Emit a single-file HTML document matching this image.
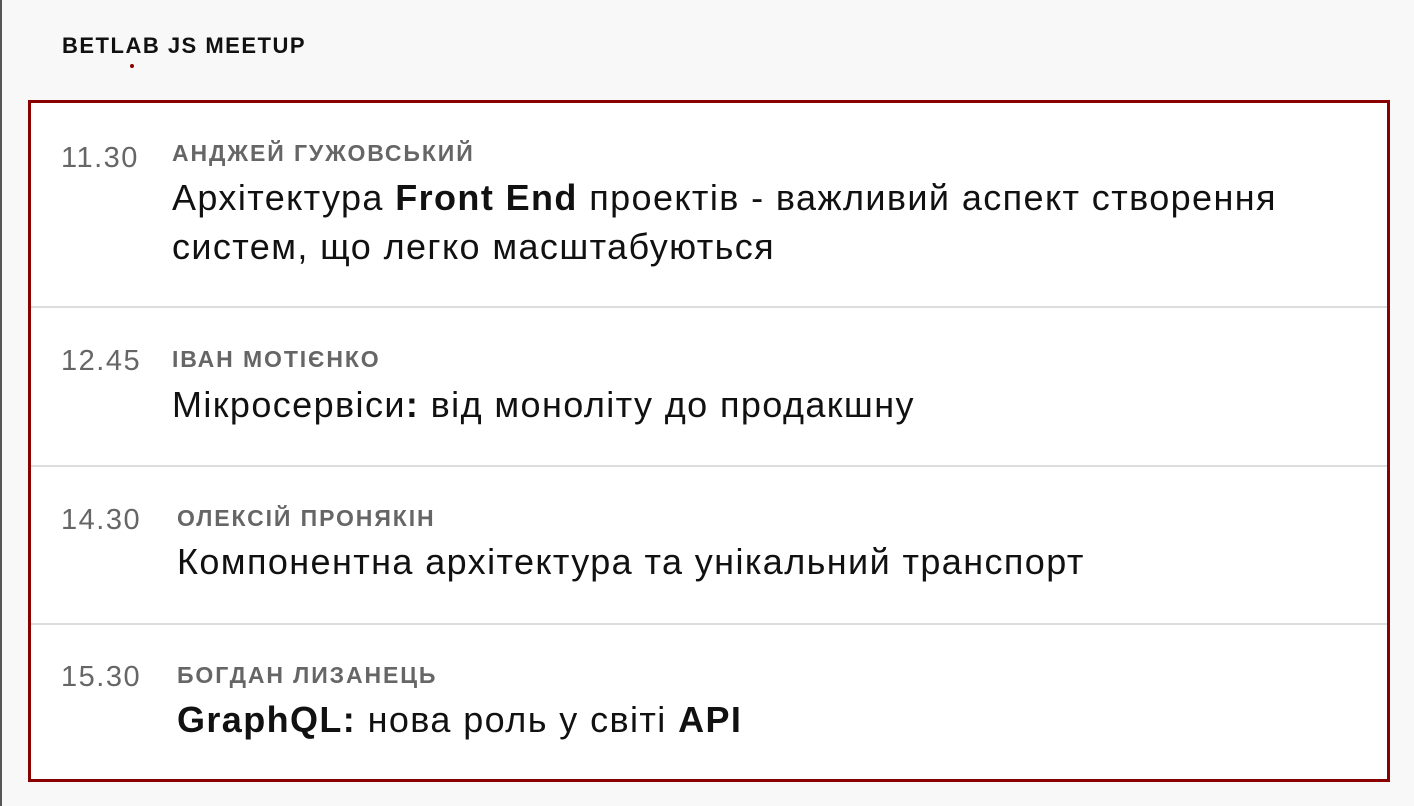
<!DOCTYPE html>
<html><head><meta charset="utf-8"><style>
body{margin:0;width:1414px;height:806px;background:#f8f8f8;font-family:"Liberation Sans",sans-serif;position:relative;overflow:hidden}
.strip{position:absolute;left:0;top:0;width:2px;height:806px;background:#555}
h1{position:absolute;left:62px;top:33px;margin:0;font-size:22px;font-weight:bold;color:#111;letter-spacing:1.5px}
.dot{position:absolute;left:130px;top:64px;width:4px;height:4px;border-radius:2px;background:#800}
.box{position:absolute;left:28px;top:100px;width:1356px;height:676px;border:3px solid #800;background:#fff}
.sep{position:absolute;left:0;right:0;height:2px;background:#ddd}
.t{position:absolute;font-size:29px;color:#666;line-height:1;letter-spacing:1.5px}
.n{position:absolute;font-size:23px;font-weight:bold;color:#666;line-height:1;letter-spacing:1.9px}
.ti{position:absolute;font-size:36px;color:#111;line-height:49px;white-space:nowrap;letter-spacing:1.4px}
</style></head><body>
<div class="strip"></div>
<h1>BETLAB JS MEETUP</h1>
<div class="dot"></div>
<div class="box">
<div class="sep" style="top:203px"></div>
<div class="sep" style="top:362px"></div>
<div class="sep" style="top:520px"></div>

<div class="t" style="left:30px;top:41px">11.30</div>
<div class="n" style="left:141px;top:39px">АНДЖЕЙ ГУЖОВСЬКИЙ</div>
<div class="ti" style="left:141px;top:70px">Архітектура <b>Front End</b> проектів - важливий аспект створення<br>систем, що легко масштабуються</div>

<div class="t" style="left:30px;top:244px">12.45</div>
<div class="n" style="left:141px;top:245px">ІВАН МОТІЄНКО</div>
<div class="ti" style="left:141px;top:277px">Мікросервіси<b>:</b> від моноліту до продакшну</div>

<div class="t" style="left:30px;top:403px">14.30</div>
<div class="n" style="left:146px;top:404px">ОЛЕКСІЙ ПРОНЯКІН</div>
<div class="ti" style="left:146px;top:434px">Компонентна архітектура та унікальний транспорт</div>

<div class="t" style="left:30px;top:560px">15.30</div>
<div class="n" style="left:146px;top:561px">БОГДАН ЛИЗАНЕЦЬ</div>
<div class="ti" style="left:146px;top:592px"><b>GraphQL:</b> нова роль у світі <b>API</b></div>
</div>
</body></html>
